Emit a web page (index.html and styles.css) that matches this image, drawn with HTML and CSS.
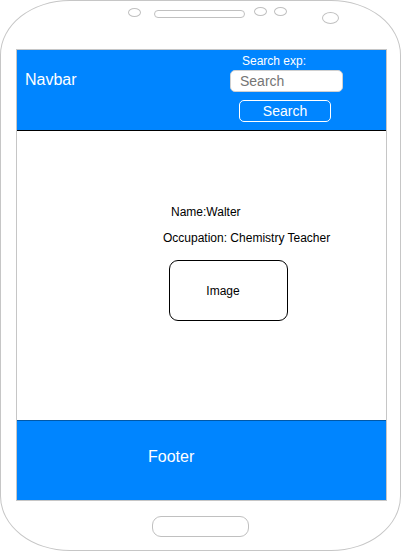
FILE: index.html
```html
<!DOCTYPE html>
<html>
<head>
<meta charset="utf-8">
<link rel="stylesheet" href="styles.css">
</head>
<body>
<div class="phone">
  <div class="top">
    <span class="dot dot-a"></span>
    <span class="speaker"></span>
    <span class="dot dot-b"></span>
    <span class="dot dot-c"></span>
    <span class="cam"></span>
  </div>
  <div class="screen">
    <div class="navbar">
      <div class="brand">Navbar</div>
      <div class="search">
        <div class="search-label">Search exp:</div>
        <input class="search-input" type="text" placeholder="Search">
        <button class="search-btn">Search</button>
      </div>
    </div>
    <div class="main">
      <div class="name">Name:Walter</div>
      <div class="occ">Occupation: Chemistry Teacher</div>
      <div class="image">Image</div>
    </div>
    <div class="footer">
      <div class="footer-text">Footer</div>
    </div>
  </div>
  <div class="home"></div>
</div>
</body>
</html>
```

FILE: styles.css
```css
html, body {
  margin: 0;
  padding: 0;
  background: #fff;
}
body {
  font-family: "Liberation Sans", Arial, sans-serif;
}
.phone {
  width: 401px;
  height: 551px;
  box-sizing: border-box;
  border: 1px solid #c6c6c6;
  border-radius: 70px / 55px;
  display: flex;
  flex-direction: column;
}
.top {
  height: 48px;
  display: flex;
  align-items: flex-start;
}
.dot {
  width: 13px;
  height: 9px;
  box-sizing: border-box;
  border: 1px solid #c0c0c0;
  border-radius: 50%;
}
.dot-a { margin-left: 127px; margin-top: 7px; }
.speaker {
  width: 91px;
  height: 8px;
  box-sizing: border-box;
  border: 1px solid #c0c0c0;
  border-radius: 4px;
  margin-left: 13px;
  margin-top: 9px;
}
.dot-b { margin-left: 9px; margin-top: 6px; }
.dot-c { margin-left: 7px; margin-top: 6px; }
.cam {
  width: 17px;
  height: 12px;
  box-sizing: border-box;
  border: 1px solid #c0c0c0;
  border-radius: 50%;
  margin-left: 35px;
  margin-top: 11px;
}
.screen {
  margin-left: 15px;
  width: 371px;
  height: 452px;
  box-sizing: border-box;
  border: 1px solid #c6c6c6;
  display: flex;
  flex-direction: column;
}
.navbar {
  height: 81px;
  box-sizing: border-box;
  background: #0085ff;
  border-bottom: 1px solid #000;
  display: flex;
  align-items: flex-start;
}
.brand {
  color: #fff;
  font-size: 16px;
  line-height: 18px;
  margin-left: 8px;
  margin-top: 21px;
}
.search {
  margin-left: auto;
  margin-right: 43px;
  width: 113px;
  display: flex;
  flex-direction: column;
  align-items: flex-start;
}
.search-label {
  color: #fff;
  font-size: 12px;
  line-height: 14px;
  margin-top: 4px;
  margin-left: 12px;
}
.search-input {
  margin: 2px 0 0 0;
  width: 113px;
  height: 22px;
  box-sizing: border-box;
  border: 1px solid #d0d0d0;
  border-radius: 5px;
  background: #fff;
  padding: 0 0 0 9px;
  font-family: "Liberation Sans", Arial, sans-serif;
  font-size: 14px;
  color: #333;
  outline: none;
}
.search-input::placeholder {
  color: #757575;
}
.search-btn {
  margin: 8px 0 0 9px;
  width: 92px;
  height: 22px;
  box-sizing: border-box;
  border: 1px solid #fff;
  border-radius: 5px;
  background: transparent;
  color: #fff;
  font-family: "Liberation Sans", Arial, sans-serif;
  font-size: 14px;
  padding: 0;
  line-height: 20px;
}
.main {
  height: 289px;
  display: flex;
  flex-direction: column;
  align-items: flex-start;
  font-size: 12px;
  line-height: 14px;
  color: #000;
}
.name {
  margin-top: 74px;
  margin-left: 154px;
}
.occ {
  margin-top: 12px;
  margin-left: 146px;
}
.image {
  margin-top: 15px;
  margin-left: 152px;
  width: 119px;
  height: 61px;
  box-sizing: border-box;
  border: 1px solid #000;
  border-radius: 9px;
  padding-right: 11px;
  display: flex;
  align-items: center;
  justify-content: center;
}
.footer {
  flex: 1;
  background: #0085ff;
  border-top: 1px solid #0058a8;
  display: flex;
  align-items: flex-start;
}
.footer-text {
  color: #fff;
  font-size: 16px;
  line-height: 18px;
  margin-left: 131px;
  margin-top: 27px;
}
.home {
  margin-top: 15px;
  margin-left: 151px;
  width: 97px;
  height: 21px;
  box-sizing: border-box;
  border: 1px solid #c0c0c0;
  border-radius: 9px;
}
```
